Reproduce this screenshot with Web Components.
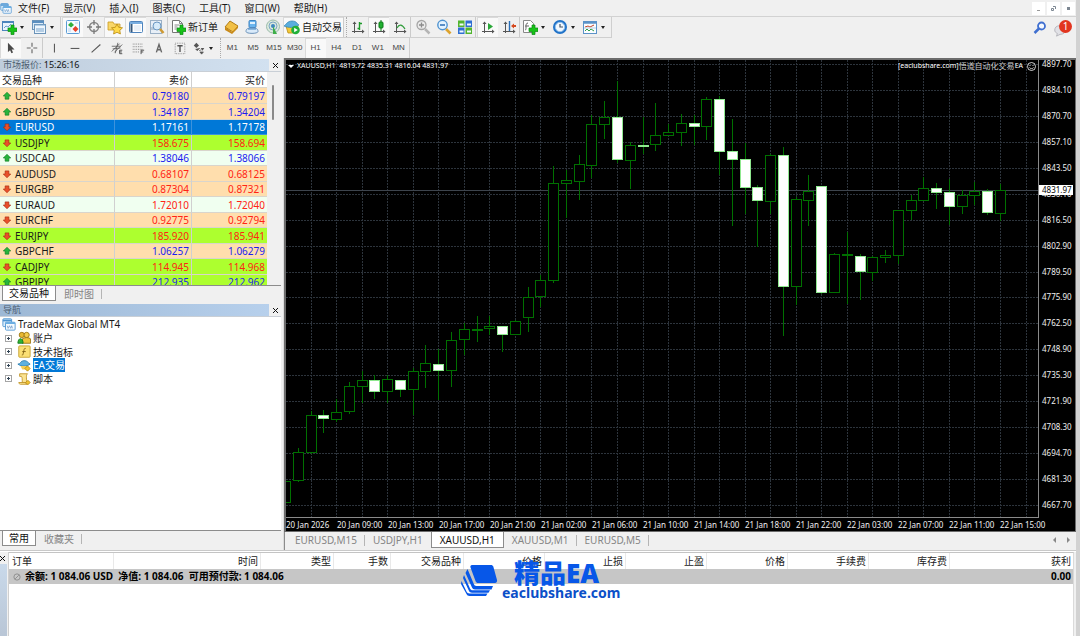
<!DOCTYPE html>
<html lang="zh-CN">
<head>
<meta charset="utf-8">
<title>MetaTrader 4</title>
<style>
html, body { margin: 0; height: 100%; background: #f0f0f0; overflow: hidden; }
body { font: 10px/14px "Noto Sans", "Noto Sans CJK SC", sans-serif; color: #1a1a1a; }
</style>
</head>
<body>
<mt-app></mt-app>
<script>
const BASE = `
:host { display: block; box-sizing: border-box; }
* { box-sizing: border-box; }
button { font: inherit; color: inherit; background: none; border: 0; padding: 0; margin: 0; display: flex; align-items: center; justify-content: center; white-space: nowrap; }
svg { display: block; }
`;

function define(name, render) {
  customElements.define(name, class extends HTMLElement {
    connectedCallback() {
      if (this.shadowRoot) return;
      const t = document.createElement('template');
      t.innerHTML = render(this);
      this.attachShadow({ mode: 'open' }).append(t.content.cloneNode(true));
    }
  });
}

const AXES = '<path d="M4.5 3v11M2 12.5h12" stroke="#555" fill="none"/><path d="M2.5 5l2-2.500 2 2.500zM12 10.500l2.500 2-2.500 2z" fill="#555"/>';
const PLUS = '<path d="M10 6h3v3h3v3.500h-3v3h-3v-3H7V9h3z" fill="#18c218" stroke="#0a8a12" stroke-width=".7"/>';
const ICONS = {
  logo: '<rect x="1" y="2" width="10" height="9" rx="1" fill="#dceefb" stroke="#4b93d1"/><path d="M1 4h10" stroke="#4b93d1" stroke-width="2"/><rect x="4" y="6" width="11" height="9" rx="1" fill="#f3faff" stroke="#4b93d1"/><path d="M4 7h11" stroke="#6aaee3" stroke-width="2"/><path d="M6 10l1 3 1.500-3 1.500 3 1-3 1 3" stroke="#6a95c4" fill="none" stroke-width=".8"/>',
  newchart: '<rect x="1.500" y="2.500" width="11" height="9" fill="#eaf4fd" stroke="#4d86bd"/><path d="M1 3h12" stroke="#4d86bd" stroke-width="2"/><path d="M3 9l2-2 2 1 3-3" stroke="#6da0cc" fill="none"/>' + PLUS,
  profiles: '<rect x="1.500" y="1.500" width="11" height="9" fill="#dcebf8" stroke="#6b93b8"/><path d="M1 3h12" stroke="#5b8fc0" stroke-width="2"/><rect x="3.500" y="5.500" width="11" height="9" fill="#eef6fd" stroke="#6b93b8"/><path d="M3 6h12M5 10h8M5 12h8" stroke="#7ba5cc"/>',
  watch: '<rect x="1.500" y="1.500" width="13" height="13" rx="1" fill="#f4faff" stroke="#5a9bd5"/><path d="M3 6l3-3 3 3-3 2.500z" fill="#2fae3a"/><path d="M7.500 10l3-3 3 3-3 3z" fill="#e8402a"/><path d="M3 10h3M3 12h3M10 4h3" stroke="#b9d3ea"/>',
  cross: '<circle cx="8" cy="8" r="4.500" fill="none" stroke="#888" stroke-width="1.500"/><path d="M8 1v5M8 10v5M1 8h5M10 8h5" stroke="#777" stroke-width="1.300"/>',
  star: '<path d="M1 3h5l1 2h6v6H1z" fill="#f9d769" stroke="#c99b22" stroke-width=".8"/><path d="M10 5l1.700 3.300 3.800.500-2.700 2.600.600 3.600-3.400-1.700L6.600 15l.600-3.600L4.500 8.800l3.800-.500z" fill="#ffd94a" stroke="#b98a10" stroke-width=".8"/>',
  terminal: '<rect x="1.500" y="2.500" width="13" height="11" rx="1" fill="#fff" stroke="#4f84bd"/><path d="M2 4h12" stroke="#79aee0" stroke-width="2"/><path d="M3.500 5v8" stroke="#36597d" stroke-width="2"/><path d="M6 7h7M6 9h7M6 11h7" stroke="#d5e2f0"/>',
  tester: '<rect x="1.500" y="1.500" width="11" height="13" fill="#e8eff7" stroke="#9ab0c6"/><path d="M3 11V8M5 11V5M11 5v4" stroke="#8aa0b6"/><circle cx="8" cy="7" r="4" fill="#d5eafa" fill-opacity=".9" stroke="#6c98c2"/><path d="M11 10l3.500 4" stroke="#cf9a33" stroke-width="2.500"/>',
  order: '<path d="M2.500 1.500h7l3 3v9h-10z" fill="#fff" stroke="#777"/><path d="M9.500 1.500v3h3M4.500 6h5M4.500 8h3M4.500 10h2" stroke="#888" fill="none"/>' + PLUS,
  book: '<path d="M2 8l5-6 8 5-5 6z" fill="#f2c045" stroke="#b17c16"/><path d="M2 8v3l7 4v-2zM9 15l6-6V7l-6 6z" fill="#c98a18"/>',
  person: '<rect x="5" y="1.500" width="7" height="7" rx="1" fill="#6bb5ee" stroke="#3c83c2"/><path d="M6 4h5" stroke="#dff1ff" stroke-width="2"/><path d="M2 12.500c0-3 2-3.500 6-3.500s6 .500 6 3.500c0 2.500-12 2.500-12 0z" fill="#d9eafa" stroke="#6d93ba"/><path d="M4 10h8" stroke="#3c83c2"/>',
  signal: '<circle cx="8" cy="7.500" r="6.500" fill="#dce9dd" stroke="#9cbcab"/><circle cx="8" cy="7" r="4" fill="none" stroke="#7ba6c4"/><circle cx="8" cy="7" r="2" fill="#3d87c0"/><path d="M8 7l4 8H8z" fill="#3fae49"/>',
  auto: '<path d="M2 7h12l-2 7H4z" fill="#f4c93a" stroke="#b68a14" stroke-width=".8"/><path d="M0 7c2-1 3-5 8-5s5 3 7 4c-4 3-11 3-15 1z" fill="#5aaede" stroke="#2f7fb0" stroke-width=".7"/><circle cx="11.500" cy="11" r="4.300" fill="#20b038"/><path d="M10.200 8.800v4.400l3.600-2.200z" fill="#fff"/>',
  bars: AXES + '<path d="M9.500 3v8M9 9.500H7.500M10 4.500h2" stroke="#1d9a2a" fill="none" stroke-width="1.400"/>',
  candles: AXES + '<path d="M10 1v11" stroke="#0b7a16"/><rect x="8" y="3" width="4" height="6" rx="1" fill="#20b030" stroke="#0b7a16"/>',
  line: AXES + '<path d="M5 9c2-4 5-4 8 1" stroke="#2f9c3a" fill="none" stroke-width="1.200"/>',
  zoomin: '<path d="M10 10l4.500 4.500" stroke="#b5b5b5" stroke-width="2.500"/><circle cx="6.500" cy="6" r="4.500" fill="#ebebeb" stroke="#a5a5a5" stroke-width="1.300"/><path d="M4 6h5M6.500 3.500v5" stroke="#8c8c8c" stroke-width="1.300"/>',
  zoomout: '<path d="M10 10l4.500 4.500" stroke="#dda32e" stroke-width="2.700"/><circle cx="6.500" cy="6" r="4.700" fill="#e3f3ff" stroke="#4f93d0" stroke-width="1.400"/><path d="M4 6h5" stroke="#2a6db5" stroke-width="1.500"/>',
  tile: '<path d="M1 1.500h6.500V8H1zM8.500 8.500H15V15H8.500z" fill="#53b52f"/><path d="M8.500 1.500H15V8H8.500zM1 8.500h6.500V15H1z" fill="#2f6fd2"/><path d="M2.500 4.500h4v2h-4zM10 4.500h4v2h-4zM2.500 11.500h4v2h-4zM10 11.500h4v2h-4z" fill="#f3fbff"/>',
  scroll: AXES + '<path d="M8 4l5 3.500L8 11z" fill="#2aa838"/>',
  shift: AXES + '<path d="M8.500 2v10" stroke="#2a6fb8" stroke-width="1.400"/><path d="M10 7l3-2.500V6h2v2h-2v1.500z" fill="#d5491f"/>',
  indicators: '<path d="M1.500 1.500h7l3 3v9h-10z" fill="#fff" stroke="#888"/><path d="M6 4c-2 0-2 2-2 4s0 3-1 3M3 7h4" stroke="#666" fill="none"/>' + PLUS,
  clock: '<circle cx="8" cy="8" r="7" fill="#1f72c8"/><circle cx="8" cy="8" r="4.700" fill="#f2f8fe" stroke="#94c2ee"/><path d="M8 5v3h3" stroke="#456" fill="none" stroke-width="1.200"/>',
  template: '<rect x="1.500" y="2.500" width="13" height="12" fill="#fafdff" stroke="#5b93c8"/><path d="M1 3.500h14" stroke="#5b93c8" stroke-width="2.500"/><path d="M3 8l3-1 2 1 4-2" stroke="#c2452a" fill="none"/><path d="M3 12l2-2 2 2 2-2 3 2" stroke="#32a04a" fill="none"/><path d="M2 9h12" stroke="#b8cde0"/>',
  cursor: '<path d="M4.500 2v10.500l2.500-2 1.500 3.500 1.800-.800-1.500-3.400H12z" fill="#4a4a4a"/>',
  plusline: '<path d="M8 2v4.500M8 9.500V14M2 8h4.500M9.500 8H14" stroke="#666" stroke-width="1.300"/>',
  vline: '<path d="M8.500 3v10" stroke="#555" stroke-width="1.200"/>',
  hline: '<path d="M3 8.500h10" stroke="#555" stroke-width="1.200"/>',
  trend: '<path d="M3 13L13 4" stroke="#555" stroke-width="1.200"/>',
  channel: '<path d="M2 12l9-9M5 13l9-9M3 9l9-1M2 6h10M6 14l3-12" stroke="#555" stroke-width=".9"/><path d="M14 10.500h-3v4h3M11 12.500h2.500" stroke="#444" fill="none"/>',
  fibo: '<path d="M2 3.500h12M2 6.500h12M2 9.500h12M2 12.500h7" stroke="#777" stroke-dasharray="1 1"/><path d="M11.500 15v-4.500H15M11.500 12.500H14" stroke="#444" fill="none"/>',
  label: '<path d="M5 13L8 4l3 9M6 10h4" stroke="#666" stroke-width="1.600" fill="none"/>',
  text: '<rect x="2.500" y="2.500" width="11" height="12" fill="none" stroke="#888" stroke-dasharray="1 1"/><path d="M5 5.500h6M8 5v7.500" stroke="#555" stroke-width="1.600"/>',
  shapes: '<path d="M2 5l3-3 3 3-3 3z" fill="#555"/><path d="M4 9l2 2 3-3M8 11l3-1M9 12.500h4l-2 2.500z" fill="#555" stroke="#555" stroke-width=".8"/><path d="M10 8h4l-2 3z" fill="#555"/>',
  search: '<circle cx="9.500" cy="6" r="3.500" fill="#f4f8ff" stroke="#3f6fd0" stroke-width="1.800"/><path d="M7 8.500L2.500 13" stroke="#3f6fd0" stroke-width="2.500"/>',
  bubble: '<path d="M8 3c4 0 6 2 6 5s-2 5-6 5l-4 2 1-3c-2-1-3-2-3-4 0-3 2-5 6-5z" fill="#e1e1e6" stroke="#b1b1b8"/>',
  up: '<path d="M8 2l6 6h-3v5H5V8H2z" fill="#28b43c" stroke="#0f7a22"/>',
  down: '<path d="M8 14L2 8h3V3h6v5h3z" fill="#e9502a" stroke="#a3260e"/>',
  account: '<circle cx="5.500" cy="4.500" r="3" fill="#e9b832" stroke="#9a7412"/><circle cx="11" cy="4.500" r="3" fill="#f4cd4c" stroke="#9a7412"/><path d="M6 14V9c2-2 8-2 9.500 0v5z" fill="#f0c33c" stroke="#9a7412"/><path d="M1 14c0-7 6-7 6 0z" fill="#2eb335" stroke="#147a1c"/>',
  fx: '<rect x="2" y="1" width="13" height="13" rx="1" fill="#fbdf74" stroke="#c6a02e"/><path d="M10 4c-2-1-2 2-2.500 4s-.500 4-2 3.500M6 7.500h4" stroke="#7a5c10" fill="none"/>',
  expert: '<path d="M1 7c3 0 3-4 7-4s4 2 7 4c-4 3-10 3-14 0z" fill="#5eb1df" stroke="#2f7fb0"/><path d="M4 9h8l-1 4H6z" fill="#f3cf5a"/><path d="M12 9l3 3-3 3-3-3z" fill="#f2c431" stroke="#b98a10"/>',
  script: '<path d="M3 2h9c-2 2-1 4-1 10H6C6 8 6 6 5 5H3z" fill="#fbe391" stroke="#c09428"/><path d="M2 12h8c0 2 1 2 2 2H4c-1 0-2-1-2-2z" fill="#fbe391" stroke="#c09428"/><path d="M12.500 9.500l2.500 2.500-2.500 2.500L10 12z" fill="#f2c431" stroke="#b98a10"/>',
  zero: '<circle cx="8" cy="8" r="5" fill="#c9c9c9" stroke="#8d8d8d" stroke-width="1.500"/><path d="M5 11l6-6" stroke="#8d8d8d" stroke-width="1.500"/>',
  brand: '<path d="M11 0h19c1 0 2 .700 2.300 1.600L36 15c.400 1.500-.500 3-2 3H17c-1 0-2-.600-2.300-1.500L9.500 2.500C9 1 9.800 0 11 0z" fill="#0757e8"/><path d="M6.500 4l6.300 15c.500 1.300 1.200 2 2.700 2H32l-1.500 3.500H14c-1.500 0-2.500-.700-3-2L4.500 8zM3 10l6 13.500c.600 1.200 1.300 1.800 2.700 1.800H29l-1.500 2.400H11c-1.500 0-2.500-.700-3-1.700L2 13zM.500 16l5 10.500c.600 1.300 1.500 2 3 2h18L25 31H8.500c-1.500 0-2.500-.700-3-2L0 19z" fill="#0757e8"/>'
};
define('mt-icon', el => {
  const brand = el.getAttribute('name') === 'brand';
  return `<style>${BASE}
  :host { width: 16px; height: 16px; flex: none; white-space: normal; }
  :host([name=brand]) { width: 37px; height: 31px; }
  :host([small]) { width: 10px; height: 10px; }
  :host([medium]) { width: 14px; height: 14px; }
  svg { width: 100%; height: 100%; }</style>
  <svg viewBox="${brand ? '0 0 37 31' : '0 0 16 16'}" aria-hidden="true">${ICONS[el.getAttribute('name')]}</svg>`;
});

define('mt-menubar', () => `<style>${BASE}
  :host { display: flex; height: 17px; border-bottom: 1px solid #d2d2d2; align-items: center; }
  nav { display: flex; flex: 1; }
  nav button { padding: 0 7px; height: 16px; }
  mt-icon { width: 12px; height: 14px; margin-right: -1px; }
  .win { display: flex; gap: 2px; padding-right: 1px; }
  .win button { width: 13px; height: 13px; background: #fff; }
  .win svg { width: 5px; height: 5px; }
  </style>
  <mt-icon name="logo"></mt-icon>
  <nav>${['文件(F)', '显示(V)', '插入(I)', '图表(C)', '工具(T)', '窗口(W)', '帮助(H)'].map(t => `<button>${t}</button>`).join('')}</nav>
  <div class="win">
    <button aria-label="最小化"><svg viewBox="0 0 5 5"><path d="M1 4.500h3" stroke="#999"/></svg></button>
    <button aria-label="还原"><svg viewBox="0 0 5 5"><path d="M2 .500h2.500V3M.500 2.500h2v2h-2z" stroke="#7d8792" fill="none"/></svg></button>
    <button aria-label="关闭"><svg viewBox="0 0 5 5"><path d="M1 1h3v3H1z" fill="#7d8792"/></svg></button>
  </div>`);

const tool = (name, label, on) => `<button class="t${on ? ' on' : ''}" aria-label="${label}"><mt-icon name="${name}"></mt-icon></button>`;
const split = (name, label) => `<button class="split" aria-label="${label}"><mt-icon name="${name}"></mt-icon><i></i></button>`;
const TOOLCSS = `
  .bar { display: flex; align-items: stretch; border-right: 1px solid #cfcfcf; }
  .t { width: 21px; }
  .split { width: 30px; justify-content: flex-start; padding-left: 1px; gap: 3px; }
  .split i { border: 2px solid transparent; border-top: 3px solid #222; border-bottom: 0; }
  .on { background: #f9f9f9; box-shadow: inset 1px 1px #dadada; }
  hr { width: 1px; margin: 0 1px 0 0; border: 0; background: #cbcbcb; flex: none; }
`;
define('mt-toolbar', () => `<style>${BASE}${TOOLCSS}
  :host { display: flex; height: 21px; justify-content: space-between; }
  .bar { border-bottom: 1px solid #cfcfcf; }
  .wide { padding: 0 2px 0 1px; gap: 2px; }
  .auto { padding: 0 1px; gap: 2px; }
  .grip { width: 4px; border-left: 1px solid #cbcbcb; border-right: 1px dotted #aaa; }
  .right { display: flex; align-items: center; padding-right: 4px; gap: 4px; }
  .chat { position: relative; width: 20px; height: 20px; }
  .chat b { position: absolute; right: 0; top: 2px; width: 13px; height: 13px; border-radius: 50%; background: #e2351f; color: #fff; font: 10px/13px "Noto Sans", sans-serif; text-align: center; }
  .chat mt-icon { margin: 5px 4px 0 0; width: 14px; height: 14px; }
  </style>
  <div class="bar">
    ${split('newchart', '新图表')}${split('profiles', '配置文件')}<hr>
    ${tool('watch', '市场报价', 1)}${tool('cross', '数据窗口')}${tool('star', '导航', 1)}${tool('terminal', '终端', 1)}${tool('tester', '策略测试')}<hr>
    <button class="wide"><mt-icon name="order"></mt-icon>新订单</button>
    ${tool('book', '编辑器')}${tool('person', '交易账户')}${tool('signal', '信号')}
    <button class="auto on"><mt-icon name="auto"></mt-icon>自动交易</button><span class="grip"></span>
    ${tool('bars', '柱状图')}${tool('candles', '蜡烛图', 1)}${tool('line', '折线图')}<hr>
    ${tool('zoomin', '放大')}${tool('zoomout', '缩小')}${tool('tile', '平铺窗口')}<hr>
    ${tool('scroll', '自动滚动', 1)}${tool('shift', '图表平移')}<hr>
    ${split('indicators', '指标')}${split('clock', '周期')}${split('template', '模板')}
  </div>
  <div class="right"><button aria-label="搜索"><mt-icon name="search"></mt-icon></button><button class="chat" aria-label="消息"><mt-icon name="bubble"></mt-icon><b>1</b></button></div>`);

define('mt-linebar', () => `<style>${BASE}${TOOLCSS}
  :host { display: flex; height: 20px; }
  .grip { width: 2px; border-left: 1px dotted #aaa; }
  .tf { width: 188px; font: 8px/12px "Liberation Sans", sans-serif; color: #444; }
  .tf button { flex: 1; }
  .bar.first { border: 0; }
  hr { margin: 0; }
  mt-icon { width: 14px; height: 14px; }
  .split { padding-left: 2px; }
  </style>
  <div class="bar first">
    ${tool('cursor', '光标', 1)}${tool('plusline', '十字准线')}<hr>
    ${tool('vline', '垂直线')}${tool('hline', '水平线')}${tool('trend', '趋势线')}${tool('channel', '等距通道')}${tool('fibo', '斐波那契')}${tool('label', '文字')}${tool('text', '文字标签')}${split('shapes', '箭头')}
  </div><span class="grip"></span>
  <div class="bar tf">${['M1', 'M5', 'M15', 'M30', 'H1', 'H4', 'D1', 'W1', 'MN'].map(t => `<button class="${t === 'H1' ? 'on' : ''}">${t}</button>`).join('')}</div>`);

define('mt-tabs', el => {
  const active = +el.getAttribute('active');
  return `<style>${BASE}
  :host { display: flex; height: 15px; padding-left: 2px; color: #858585; }
  button { padding: 0 8px; position: relative; }
  button::after { content: ""; position: absolute; right: 0; top: 3px; bottom: 2px; border-right: 1px solid #b5b5b5; }
  .active { background: #fff; color: #111; border: 1px solid #8c8c8c; border-top: 0; padding: 0 var(--active-pad, 6px); }
  .active::after, .before::after { display: none; }
  div { display: flex; flex: 1; }
  </style><div role="tablist">${el.getAttribute('items').split('|').map((t, i) =>
    `<button role="tab" aria-selected="${i === active}" class="${i === active ? 'active' : i === active - 1 ? 'before' : ''}">${t}</button>`).join('')}</div><slot></slot>`;
});

define('mt-panel', () => `<style>${BASE}
  :host { display: flex; flex-direction: column; min-height: 0; }
  header { display: flex; height: 13px; font-size: 9px; line-height: 12px; flex: none; border-bottom: 1px solid #c9cfd6; }
  .title { flex: 1; padding-left: 3px; color: #4d5d70; background: var(--title-bg); white-space: pre; }
  header button { width: 12px; }
  svg { width: 5px; height: 5px; }
  .body { flex: 1; min-height: 0; overflow: hidden; background: #fff; border-bottom: 1px solid #8c8c8c; }
  </style>
  <header><div class="title"><slot name="title"></slot></div><button aria-label="关闭"><svg viewBox="0 0 5 5"><path d="M0 0l5 5M5 0L0 5" stroke="#111"/></svg></button></header>
  <div class="body"><slot></slot></div><slot name="tabs"></slot>`);

const QUOTES = [
  ['USDCHF', '0.79180', '0.79197', 'up', 'sand'], ['GBPUSD', '1.34187', '1.34204', 'up', 'sand'],
  ['EURUSD', '1.17161', '1.17178', 'down', 'sel'], ['USDJPY', '158.675', '158.694', 'down', 'lime'],
  ['USDCAD', '1.38046', '1.38066', 'up', 'mint'], ['AUDUSD', '0.68107', '0.68125', 'down', 'sand'],
  ['EURGBP', '0.87304', '0.87321', 'down', 'sand'], ['EURAUD', '1.72010', '1.72040', 'down', 'mint'],
  ['EURCHF', '0.92775', '0.92794', 'down', 'sand'], ['EURJPY', '185.920', '185.941', 'down', 'lime'],
  ['GBPCHF', '1.06257', '1.06279', 'up', 'sand'], ['CADJPY', '114.945', '114.968', 'down', 'lime'],
  ['GBPJPY', '212.935', '212.962', 'up', 'lime']
];
define('mt-market-watch', () => `<style>${BASE}
  mt-panel { height: 242px; --title-bg: linear-gradient(90deg, #bfcddc, #d2e1f0); }
  .time { color: #111; }
  .view { display: flex; height: 213px; background: #f0f0f0; overflow: hidden; align-items: flex-start; }
  table { flex: 1; border-collapse: separate; border-spacing: 0; table-layout: fixed; background: #fff; }
  th, td { padding: 0 2px 0 0; height: 16px; line-height: 14px; font-weight: 400; text-align: right; border-right: 1px solid #d0d0d0; border-bottom: 1px solid #d9d5cc; white-space: nowrap; }
  tbody tr:nth-child(odd) td, tbody tr:nth-child(odd) th { height: 15px; }
  tbody tr:first-child td, tbody tr:first-child th { height: 16px; }
  th:first-child { width: 115px; text-align: left; padding-left: 2px; }
  th:last-child, td:last-child { border-right: 0; }
  tbody th:first-child { padding-left: 2px; }
  .name { display: flex; align-items: center; gap: 3px; }
  .sand { background: #ffdead; } .lime { background: #adff2f; } .mint { background: #f0fff0; }
  .up td { color: #1c1cf0; } .down td { color: #ff2414; }
  .sel { background: #0078d7; } .sel td, .sel th { color: #fff; border-color: #3d93dc; }
  .track { width: 14px; padding: 13px 0 0 5px; }
  .thumb { width: 2px; height: 35px; background: #8a8a8a; border-radius: 1px; }
  </style>
  <mt-panel><span slot="title">市场报价: <span class="time">15:26:16</span></span>
    <div class="view"><table><thead><tr><th>交易品种</th><th>卖价</th><th>买价</th></tr></thead><tbody>
    ${QUOTES.map(([s, a, b, d, c]) => `<tr class="${d} ${c}"><th scope="row"><span class="name"><mt-icon small name="${d}"></mt-icon>${s}</span></th><td>${a}</td><td>${b}</td></tr>`).join('')}
    </tbody></table><div class="track"><div class="thumb"></div></div></div>
    <mt-tabs slot="tabs" items="交易品种|即时图" active="0"></mt-tabs>
  </mt-panel>`);

define('mt-navigator', () => `<style>${BASE}
  :host { display: flex; }
  mt-panel { flex: 1; --title-bg: linear-gradient(90deg, #9db8d5, #b7d0ec); }
  ul { list-style: none; margin: 0; padding: 0 0 0 2px; }
  ul ul { padding: 0 0 0 3px; }
  .row { display: flex; align-items: center; height: 14px; gap: 2px; line-height: 14px; }
  ul ul li:nth-child(even) .row { height: 13px; }
  ul ul .row { gap: 2px; }
  .plus { width: 7px; height: 7px; border: 1px solid #a5a5a5; background: #fff; margin-right: 3px; }
  .plus svg { width: 5px; height: 5px; flex: none; }
  .sel { background: #0078d7; color: #fff; }
  </style>
  <mt-panel><span slot="title">导航</span>
    <ul><li><span class="row"><mt-icon medium name="logo"></mt-icon>TradeMax Global MT4</span><ul>
    ${[['account', '账户'], ['fx', '技术指标'], ['expert', 'EA交易'], ['script', '脚本']].map(([i, t]) => `<li><span class="row"><button class="plus" aria-label="展开${t}"><svg viewBox="0 0 5 5"><path d="M1 2.500h3M2.500 1v3" stroke="#345"/></svg></button><mt-icon medium name="${i}"></mt-icon><span class="${i === 'expert' ? 'sel' : ''}">${t}</span></span></li>`).join('')}
    </ul></li></ul>
    <mt-tabs slot="tabs" items="常用|收藏夹" active="0"></mt-tabs>
  </mt-panel>`);

/* One entry per hour: wick top, body top, body bottom, wick bottom, 1 = falling. */
const CANDLES = [
  [418,421,443,448],[388,392,421,422],[351,355,393,394],[350,355,359,373,1],[339,352,360,362],[322,326,352,354],[311,320,327,343],[315,320,332,339,1],
  [315,319,332,343],[320,320,330,337,1],[308,311,330,355],[285,303,312,328],[289,304,311,340,1],[272,280,311,327],[263,269,280,295],[256,269,270,282],
  [256,266,269,275],[266,266,275,292,1],[260,261,275,275],[227,237,258,272],[215,220,237,247],[106,123,221,223],[110,120,124,158],[95,104,122,140],
  [55,64,106,118],[41,57,65,79],[21,57,100,103,1],[82,85,101,129],[57,85,86,94,1],[43,75,85,91],[64,72,76,76],[54,63,73,86],
  [55,63,67,85,1],[37,39,67,80],[36,39,92,115,1],[59,91,100,166,1],[83,99,128,154,1],[125,127,141,187,1],[94,95,142,154],[87,95,227,276,1],
  [137,139,227,245],[115,131,141,166],[126,126,233,234,1],[193,194,233,233],[172,194,195,244],[194,196,212,240,1],[196,197,213,221],[190,195,198,203],
  [150,150,196,204],[135,140,151,160],[117,128,141,141],[123,128,133,149,1],[119,132,147,165,1],[130,135,147,154],[122,131,136,145],[129,131,153,155,1],[124,130,154,161]
];
const PRICES = ['4897.70','4884.10','4870.70','4857.10','4843.50','4830.10','4816.50','4802.90','4789.50','4775.90','4762.50','4748.90','4735.30','4721.90','4708.30','4694.70','4681.30','4667.70'];
const TIMES = ['20 Jan 2026','20 Jan 09:00','20 Jan 13:00','20 Jan 17:00','20 Jan 21:00','21 Jan 02:00','21 Jan 06:00','21 Jan 10:00','21 Jan 14:00','21 Jan 18:00','21 Jan 22:00','22 Jan 03:00','22 Jan 07:00','22 Jan 11:00','22 Jan 15:00'];

function plot() {
  const STEP = 715 / 56;
  let s = '<g stroke="#2d343c" stroke-dasharray="2 1">';
  for (let i = 0; i < PRICES.length; i++) { const y = Math.round(4 + i * 441 / 17) + .5; s += `<path d="M0 ${y}H2000"/>`; }
  for (let i = 1; i < 30; i++) { const x = Math.round(i * 2 * STEP) - .5; s += `<path d="M${x} 0V2000"/>`; }
  s += '</g><path d="M0 130.500H2000" stroke="#3d444d"/>';
  CANDLES.forEach(([h, t, b, l, falling], i) => {
    const x = Math.round(i * STEP) - 1;
    s += `<path d="M${x + .5} ${h}V${l}" stroke="#007000"/>`;
    s += `<rect x="${x - 4.5}" y="${t + .5}" width="10" height="${Math.max(b - t - 1, 1)}" fill="${falling ? '#fff' : '#000'}" stroke="${falling ? '#8fe88f' : '#007000'}"/>`;
  });
  return s;
}
define('mt-chart', () => `<style>${BASE}
  :host { display: flex; flex-direction: column; min-width: 0; }
  .frame { flex: 1; min-height: 0; display: grid; grid-template: minmax(0, 1fr) 13px / minmax(0, 1fr) 36px; background: #000; border: 2px solid #6c6c6c; border-width: 2px 1px 1px 2px; color: #f0f0f0; font: 8px/8px "Noto Sans", sans-serif; }
  .plot { position: relative; overflow: hidden; border: solid #8a8a8a; border-width: 0 1px 1px 0; }
  .plot svg { width: 100%; height: 100%; }
  .head { position: absolute; inset: 0 2px auto 2px; display: flex; justify-content: space-between; align-items: center; height: 12px; color: #fff; font: 7px/12px "Noto Sans", sans-serif; }
  .head span { display: flex; align-items: center; white-space: pre; }
  .head i { border: 3px solid transparent; border-top-color: #fff; border-bottom: 0; margin-right: 3px; }
  .head b { font: 8px/12px "Noto Sans CJK SC", sans-serif; color: #ccc; }
  .head .ea svg { width: 9px; height: 9px; margin-left: 4px; }
  .prices { position: relative; display: flex; flex-direction: column; justify-content: space-between; padding: 0 0 9px 3px; }
  .now { position: absolute; left: 0; top: 125px; width: 34px; padding: 1px 0 1px 3px; background: #fff; color: #000; }
  .times { grid-column: 1 / 3; display: grid; grid-auto-flow: column; grid-auto-columns: 51px; justify-content: start; align-items: center; white-space: nowrap; }
  mt-tabs { height: 18px; border-left: 1px solid #8c8c8c; padding: 0 0 2px 2px; --active-pad: 8px; }
  .arrows { display: flex; gap: 9px; align-items: center; padding-right: 5px; }
  .arrows svg { width: 5px; height: 6px; }
  </style>
  <div class="frame">
    <div class="plot"><svg aria-label="XAUUSD H1">${plot()}</svg>
      <div class="head"><span><i></i>XAUUSD,H1  4819.72 4835.31 4816.04 4831.97</span>
      <span class="ea">[eaclubshare.com]<b>悟道自动化交易</b>EA<svg viewBox="0 0 9 9"><circle cx="4.500" cy="4.500" r="4" fill="none" stroke="#fff" stroke-width=".8"/><path d="M2.500 3.500h1M5.500 3.500h1M2.500 5.500c1 1.500 3 1.500 4 0" stroke="#fff" fill="none" stroke-width=".8"/></svg></span></div>
    </div>
    <div class="prices">${PRICES.map(p => `<span>${p}</span>`).join('')}<span class="now">4831.97</span></div>
    <div class="times">${TIMES.map(t => `<span>${t}</span>`).join('')}</div>
  </div>
  <mt-tabs items="EURUSD,M15|USDJPY,H1|XAUUSD,H1|XAUUSD,M1|EURUSD,M5" active="2"><div class="arrows">
    <button aria-label="向左"><svg viewBox="0 0 5 6"><path d="M4 0v6L1 3z" fill="#888"/></svg></button><button aria-label="向右"><svg viewBox="0 0 5 6"><path d="M1 0v6l3-3z" fill="#888"/></svg></button>
  </div></mt-tabs>`);

const COLS = [['订单', 105], ['时间', 147], ['类型', 73], ['手数', 57], ['交易品种', 73], ['价格', 81], ['止损', 81], ['止盈', 81], ['价格', 81], ['手续费', 81], ['库存费', 81], ['获利', 0]];
define('mt-terminal', () => `<style>${BASE}
  :host { display: flex; position: relative; height: 85px; border-top: 1px solid #fff; overflow: hidden; }
  aside { width: 9px; flex: none; display: flex; flex-direction: column; border-right: 1px solid #cfcfcf; }
  aside button { height: 12px; justify-content: flex-start; }
  aside svg { width: 5px; height: 5px; }
  aside div { flex: 1; margin-right: 1px; background: linear-gradient(#c9d9ea, #b9c6d6); }
  main { flex: 1; background: #fff; border-top: 1px solid #c4c4c4; border-right: 1px solid #dadada; margin-right: 2px; }
  table { width: 100%; table-layout: fixed; border-collapse: separate; border-spacing: 0; }
  th, td { padding: 0 2px; height: 16px; line-height: 15px; text-align: right; font-weight: 400; white-space: pre; }
  th { border-right: 1px solid #e9e9e9; }
  th:last-child { border: 0; }
  th:first-child { text-align: left; padding-left: 3px; }
  tbody td { height: 15px; background: #c6c6c6; font-weight: 700; color: #000; }
  .sum { display: flex; align-items: center; gap: 3px; padding-left: 1px; }
  .brand { position: absolute; left: 461px; top: 8px; display: flex; align-items: flex-start; gap: 4px; color: #0757e8; font-weight: 700; }
  .brand mt-icon { margin-top: 5px; }
  .brand div { display: grid; }
  .brand strong { font-size: 26px; line-height: 26px; padding-left: 12px; }
  .brand a { font-size: 14px; line-height: 14px; color: #0b50c8; text-decoration: none; }
  </style>
  <aside><button aria-label="关闭"><svg viewBox="0 0 5 5"><path d="M0 0l5 5M5 0L0 5" stroke="#111"/></svg></button><div></div></aside>
  <main><table><colgroup>${COLS.map(([, w]) => w ? `<col style="width:${w}px">` : '<col>').join('')}</colgroup>
    <thead><tr>${COLS.map(([t]) => `<th>${t}</th>`).join('')}</tr></thead>
    <tbody><tr><td colspan="11"><span class="sum"><mt-icon small name="zero"></mt-icon>余额: 1 084.06 USD  净值: 1 084.06  可用预付款: 1 084.06</span></td><td>0.00</td></tr></tbody></table></main>
  <div class="brand"><mt-icon name="brand"></mt-icon><div><strong>精品EA</strong><a href="#">eaclubshare.com</a></div></div>`);

define('mt-app', () => `<style>${BASE}
  :host { display: flex; flex-direction: column; height: 100vh; background: #f0f0f0; border-right: 4px solid #d2d2d2; }
  .work { flex: 1; min-height: 0; display: grid; grid-template-columns: 284px minmax(0, 1fr); border-bottom: 1px solid #c9c9c9; }
  .left { display: flex; flex-direction: column; min-height: 0; padding: 1px 2px 4px 0; gap: 3px; border-right: 1px solid #dcdcdc; }
  mt-navigator { flex: 1; min-height: 0; }
  </style>
  <mt-menubar></mt-menubar><mt-toolbar></mt-toolbar><mt-linebar></mt-linebar>
  <div class="work"><div class="left"><mt-market-watch></mt-market-watch><mt-navigator></mt-navigator></div><mt-chart></mt-chart></div>
  <mt-terminal></mt-terminal>`);
</script>
</body>
</html>
